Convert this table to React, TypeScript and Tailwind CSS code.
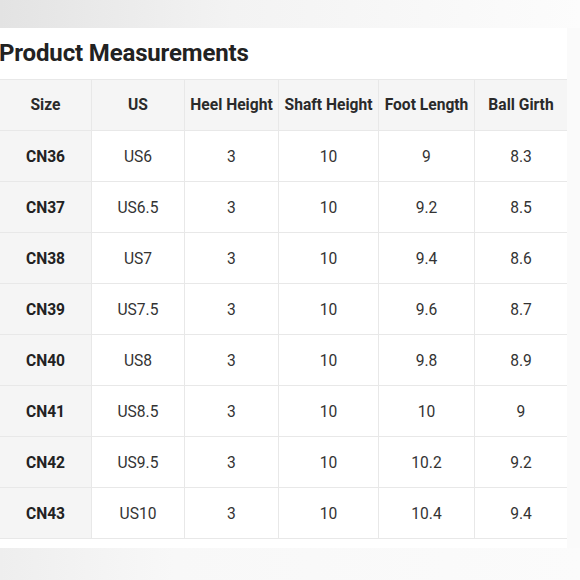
const rows = [
  ["CN36", "US6", "3", "10", "9", "8.3"],
  ["CN37", "US6.5", "3", "10", "9.2", "8.5"],
  ["CN38", "US7", "3", "10", "9.4", "8.6"],
  ["CN39", "US7.5", "3", "10", "9.6", "8.7"],
  ["CN40", "US8", "3", "10", "9.8", "8.9"],
  ["CN41", "US8.5", "3", "10", "10", "9"],
  ["CN42", "US9.5", "3", "10", "10.2", "9.2"],
  ["CN43", "US10", "3", "10", "10.4", "9.4"],
];

const headers = ["Size", "US", "Heel Height", "Shaft Height", "Foot Length", "Ball Girth"];

export default function App() {
  return (
    <div
      className="w-[580px] h-[580px] overflow-hidden bg-white flex flex-col"
      style={{ fontFamily: "Roboto, 'Liberation Sans', sans-serif" }}
    >
      <div className="h-[28px] shrink-0 bg-gradient-to-r from-[#e3e3e3] via-[#f3f3f3] via-40% to-[#fcfcfc]" />
      <div className="flex-1 flex">
        <div className="w-[567px] bg-white">
          <h1 className="mt-[10px] h-[30px] leading-[30px] text-[24px] font-bold text-[#222] -ml-px tracking-[-0.15px]">
            Product Measurements
          </h1>
          <table className="mt-[11px] -ml-px w-[568px] table-fixed border-collapse text-[15.6px] text-[#333]">
            <colgroup>
              <col className="w-[92px]" />
              <col className="w-[93px]" />
              <col className="w-[94px]" />
              <col className="w-[100px]" />
              <col className="w-[96px]" />
              <col className="w-[93px]" />
            </colgroup>
            <thead>
              <tr className="h-[51px] bg-[#f5f5f5]">
                {headers.map((h) => (
                  <th
                    key={h}
                    className="border border-[#e8e8e8] px-0 pt-[2px] font-bold text-[#2a2a2a] whitespace-nowrap text-center"
                  >
                    {h}
                  </th>
                ))}
              </tr>
            </thead>
            <tbody>
              {rows.map((r) => (
                <tr key={r[0]} className="h-[51px]">
                  {r.map((c, i) => (
                    <td
                      key={i}
                      className={`border border-[#e8e8e8] pt-[3px] text-center ${
                        i === 0 ? "bg-[#f5f5f5] font-bold text-[#222]" : "bg-white"
                      }`}
                    >
                      {c}
                    </td>
                  ))}
                </tr>
              ))}
            </tbody>
          </table>
        </div>
        <div className="flex-1 bg-[#fafafa]" />
      </div>
      <div className="h-[32px] shrink-0 bg-gradient-to-r from-[#eeeeee] via-[#f8f8f8] via-30% to-[#fbfbfb]" />
    </div>
  );
}
